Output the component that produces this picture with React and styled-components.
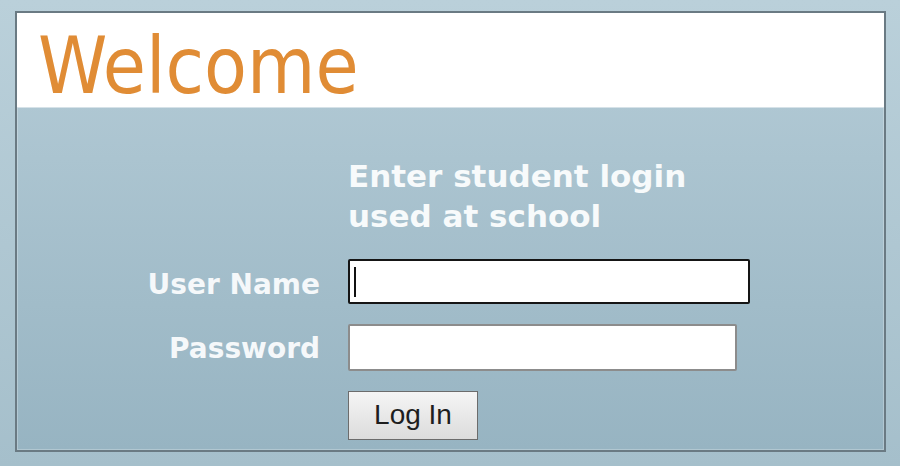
import React from "react";
import styled, { createGlobalStyle } from "styled-components";

const GlobalStyle = createGlobalStyle`
  html, body {
    margin: 0;
    padding: 0;
    background: linear-gradient(#bad0da, #a5bfcb);
    height: 466px;
    overflow: hidden;
  }
`;

const Page = styled.div`
  width: 900px;
  height: 466px;
  box-sizing: border-box;
  padding: 11px 14px 0 15px;
`;

const Panel = styled.div`
  width: 871px;
  height: 441px;
  box-sizing: border-box;
  border: 2px solid #6a7a83;
  box-shadow: inset 0 0 0 1px rgba(255, 255, 255, 0.25);
  background: linear-gradient(#b5ccd7, #97b4c2);
  display: flex;
  flex-direction: column;
`;

const Header = styled.div`
  height: 95px;
  box-sizing: border-box;
  background: #ffffff;
  border-bottom: 1px solid #d6e2e8;
  padding: 14px 0 0 21px;
`;

const Title = styled.h1`
  margin: 0;
  font-family: "DejaVu Sans Condensed", "DejaVu Sans", sans-serif;
  font-weight: normal;
  font-size: 78px;
  line-height: 1;
  color: #e08c35;
`;

const Form = styled.div`
  display: grid;
  grid-template-columns: 303px auto;
  column-gap: 28px;
  row-gap: 20px;
  padding-top: 48px;
  align-items: center;
`;

const Intro = styled.div`
  grid-column: 2;
  margin-bottom: 3px;
  font-family: "DejaVu Sans", sans-serif;
  font-weight: bold;
  font-size: 31px;
  line-height: 40px;
  color: #f7fafb;
`;

const Label = styled.label`
  text-align: right;
  padding-top: ${(p) => p.$drop || 0}px;
  font-family: "DejaVu Sans", sans-serif;
  font-weight: bold;
  font-size: 28px;
  color: #f5f8fa;
`;

const Field = styled.div`
  position: relative;
  width: ${(p) => p.$w}px;
  height: ${(p) => p.$h}px;
  ${(p) =>
    p.$focused &&
    `
    &::after {
      content: "";
      position: absolute;
      left: 6px;
      top: 8px;
      width: 2px;
      height: 30px;
      background: #111;
    }
  `}
`;

const Input = styled.input`
  width: 100%;
  height: 100%;
  box-sizing: border-box;
  margin: 0;
  border: 2px solid ${(p) => (p.$focused ? "#151515" : "#8c8c8c")};
  border-radius: 2px;
  background: #fff;
  outline: none;
  caret-color: transparent;
`;

const Button = styled.button`
  grid-column: 2;
  justify-self: start;
  width: 130px;
  height: 49px;
  box-sizing: border-box;
  border: 1px solid #6c6c6c;
  background: linear-gradient(#f5f5f5, #dcdcdc);
  font-family: "Liberation Sans", Arial, sans-serif;
  font-size: 28px;
  color: #1e1e1e;
  padding: 0 0 2px;
`;

export default function App() {
  return (
    <>
      <GlobalStyle />
      <Page>
        <Panel>
          <Header>
            <Title>Welcome</Title>
          </Header>
          <Form>
            <Intro>
              Enter student login
              <br />
              used at school
            </Intro>
            <Label $drop={6}>User Name</Label>
            <Field $w={402} $h={45} $focused>
              <Input type="text" $focused />
            </Field>
            <Label $drop={2}>Password</Label>
            <Field $w={389} $h={47}>
              <Input type="password" />
            </Field>
            <Button>Log In</Button>
          </Form>
        </Panel>
      </Page>
    </>
  );
}
